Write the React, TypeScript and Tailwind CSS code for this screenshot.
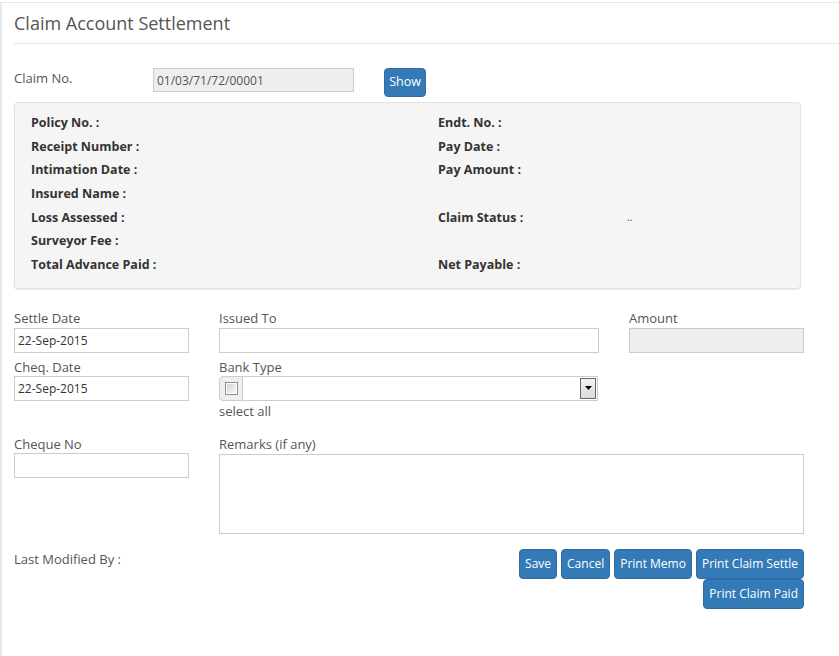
import { useState } from 'react';

const leftInfo = ['Policy No. :', 'Receipt Number :', 'Intimation Date :', 'Insured Name :', 'Loss Assessed :', 'Surveyor Fee :', 'Total Advance Paid :'];

const rightInfo: { label: string; value?: string }[] = [
  { label: 'Endt. No. :' },
  { label: 'Pay Date :' },
  { label: 'Pay Amount :' },
  { label: '' },
  { label: 'Claim Status :', value: '..' },
  { label: '' },
  { label: 'Net Payable :' },
];

const inputCls =
  'block w-full h-[25px] border border-[#ccc] bg-white px-[3px] text-[12px] text-[#333] outline-none';

function Btn({ children }: { children: React.ReactNode }) {
  return (
    <button className="h-[30px] px-[5px] rounded-[4px] border border-[#2e6da4] bg-[#337ab7] text-[12px] text-white leading-none">
      {children}
    </button>
  );
}

export default function App() {
  const [checked, setChecked] = useState(false);

  return (
    <div className="min-h-screen bg-white pt-[2px] font-['Open_Sans',sans-serif] text-[13px] text-[#555]">
      <div className="min-h-[654px] border-l-2 border-t border-[#e8e8e8]">
        <div className="ml-[12px] h-[41px] border-b border-[#e5e5e5] pt-[8px]">
          <h1 className="text-[18px] leading-[24px] text-[#555]">Claim Account Settlement</h1>
        </div>

        <div className="ml-[12px] mr-[37px]">
          {/* claim no */}
          <div className="mt-[24px] flex items-start">
            <div className="w-[139px] pt-[1px] leading-[18px]">Claim No.</div>
            <input
              readOnly
              value="01/03/71/72/00001"
              className="h-[24px] w-[201px] border border-[#ccc] bg-[#eee] px-[3px] text-[12px] text-[#555] outline-none"
            />
            <button className="ml-[30px] h-[29px] w-[42px] rounded-[4px] border border-[#2e6da4] bg-[#337ab7] text-[12.5px] text-white">
              Show
            </button>
          </div>

          {/* info well */}
          <div className="mt-[5px] mr-[1px] rounded-[4px] border border-[#e3e3e3] bg-[#f5f5f5] pl-[16px] pt-[8px] pb-[11px] shadow-[0_1px_1px_rgba(0,0,0,0.08)]">
            <div className="grid grid-cols-[407px_1fr] text-[12.5px] font-bold text-[#333]">
              <div>
                {leftInfo.map((l) => (
                  <div key={l} className="h-[23.7px] leading-[23.7px]">{l}</div>
                ))}
              </div>
              <div>
                {rightInfo.map((r, i) => (
                  <div key={i} className="flex h-[23.7px] leading-[23.7px]">
                    <span className="w-[189px]">{r.label}</span>
                    {r.value && <span className="text-[10px] font-normal text-[#c00]">{r.value}</span>}
                  </div>
                ))}
              </div>
            </div>
          </div>

          {/* form */}
          <div className="mt-[20px] grid grid-cols-[175px_380px_175px] gap-x-[30px]">
            <div>
              <div className="h-[19px] leading-[18px]">Settle Date</div>
              <input readOnly value="22-Sep-2015" className={inputCls} />
            </div>
            <div>
              <div className="h-[19px] leading-[18px]">Issued To</div>
              <input readOnly value="" className={inputCls} />
            </div>
            <div>
              <div className="h-[19px] leading-[18px]">Amount</div>
              <input readOnly value="" className={inputCls + ' !bg-[#eee]'} />
            </div>

            <div className="mt-[5px]">
              <div className="h-[18px] leading-[18px]">Cheq. Date</div>
              <input readOnly value="22-Sep-2015" className={inputCls} />
            </div>
            <div className="mt-[5px]">
              <div className="h-[18px] leading-[18px]">Bank Type</div>
              <div className="flex h-[25px] w-[379px]">
                <div className="flex w-[24px] items-center justify-center rounded-l-[4px] border border-[#ccc] bg-[#eee]">
                  <span
                    onClick={() => setChecked(!checked)}
                    className="flex h-[13px] w-[13px] items-center justify-center border border-[#8f8f8f] bg-white"
                  >
                    <span className="block h-[9px] w-[9px] bg-gradient-to-br from-[#d4d4d4] to-[#f8f8f8]" />
                  </span>
                </div>
                <div className="flex flex-1 items-stretch justify-end border border-l-0 border-[#ccc] bg-white p-[1px]">
                  <div className="flex w-[16px] items-center justify-center border border-[#666] bg-gradient-to-b from-[#f4f4f4] to-[#d9d9d9]">
                    <svg width="7" height="4" viewBox="0 0 7 4">
                      <path d="M0 0h7L3.5 4z" fill="#000" />
                    </svg>
                  </div>
                </div>
              </div>
              <div className="h-[19px] leading-[20px]">select all</div>
            </div>
            <div />

            <div className="mt-[15px]">
              <div className="h-[18px] leading-[18px]">Cheque No</div>
              <input readOnly value="" className={inputCls} />
            </div>
            <div className="col-span-2 mt-[15px]">
              <div className="h-[19px] leading-[18px]">Remarks (if any)</div>
              <textarea readOnly className="block h-[80px] w-full resize-none border border-[#ccc] bg-white outline-none" />
            </div>
          </div>

          <div className="mt-[15px] flex w-[790px] items-start justify-between">
            <div className="pt-[1px] leading-[18px]">Last Modified By :</div>
            <div className="flex w-[300px] flex-wrap justify-end gap-x-[4px]">
              <Btn>Save</Btn>
              <Btn>Cancel</Btn>
              <Btn>Print Memo</Btn>
              <Btn>Print Claim Settle</Btn>
              <Btn>Print Claim Paid</Btn>
            </div>
          </div>
        </div>
      </div>
    </div>
  );
}
